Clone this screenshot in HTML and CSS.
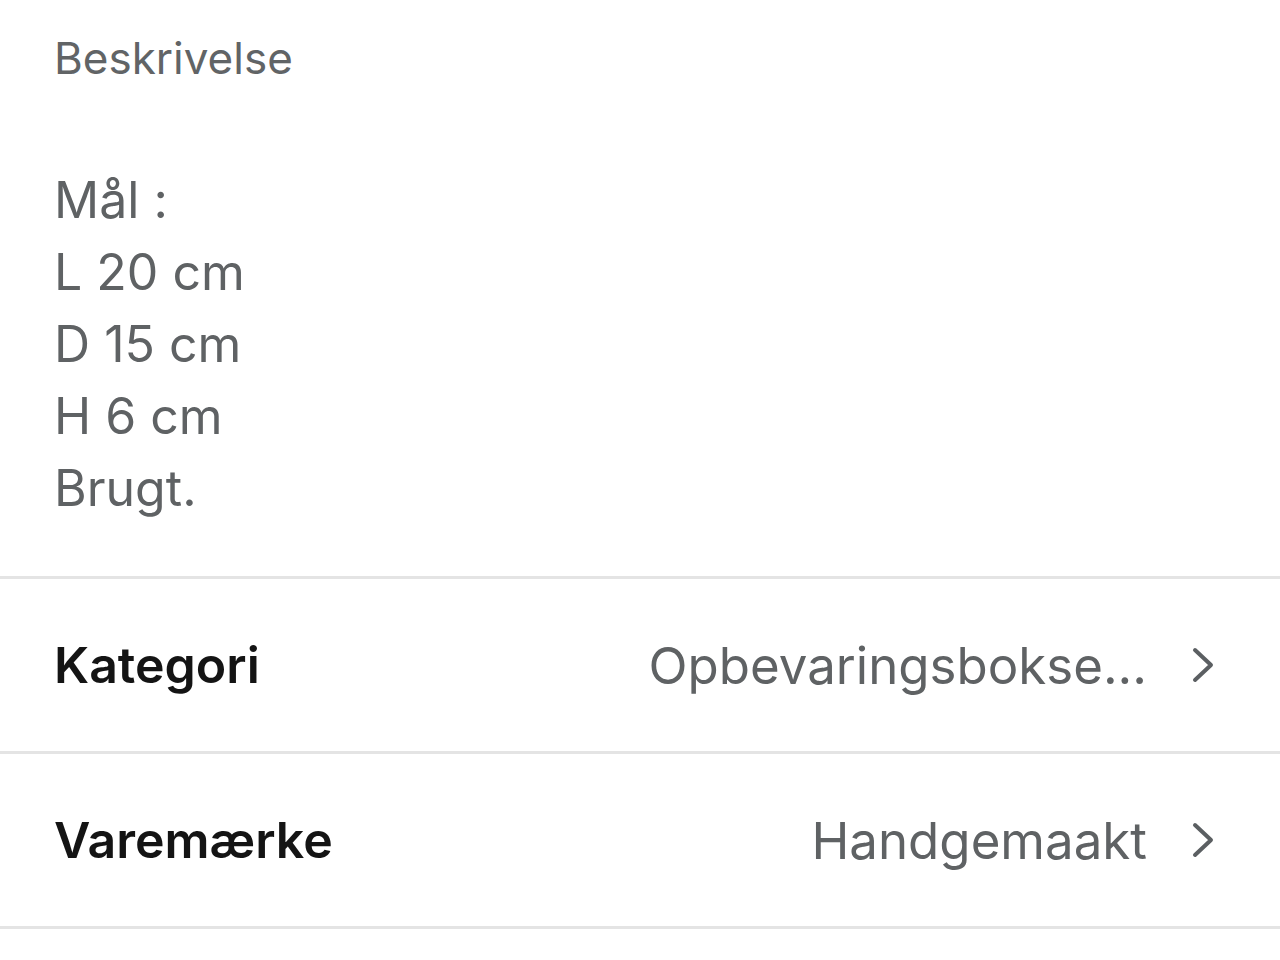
FILE: index.html
```html
<!DOCTYPE html>
<html lang="da">
<head>
<meta charset="utf-8">
<link rel="stylesheet" href="styles.css">
</head>
<body>
<main class="page">
  <section class="desc">
    <h2 class="desc-title">Beskrivelse</h2>
    <div class="desc-body">
      <div>Mål :</div>
      <div>L 20 cm</div>
      <div>D 15 cm</div>
      <div>H 6 cm</div>
      <div>Brugt.</div>
    </div>
  </section>
  <div class="row">
    <span class="row-label">Kategori</span>
    <span class="row-value">Opbevaringsbokse...</span>
    <svg class="chev" viewBox="0 0 24 36" width="24" height="36"><path d="M4 3 L20 18 L4 33" fill="none" stroke="#5b5f62" stroke-width="4" stroke-linecap="round" stroke-linejoin="round"/></svg>
  </div>
  <div class="row">
    <span class="row-label">Varemærke</span>
    <span class="row-value">Handgemaakt</span>
    <svg class="chev" viewBox="0 0 24 36" width="24" height="36"><path d="M4 3 L20 18 L4 33" fill="none" stroke="#5b5f62" stroke-width="4" stroke-linecap="round" stroke-linejoin="round"/></svg>
  </div>
</main>
</body>
</html>
```
FILE: styles.css
```css
* { box-sizing: border-box; }
html, body { margin: 0; padding: 0; background: #fff; }
body { font-family: Inter, "Noto Sans", sans-serif; }
.page { width: 1280px; }
.desc { padding: 28px 54px 52px; border-bottom: 3px solid #e4e4e4; }
.desc-title { margin: 0; font-weight: 400; font-size: 44px; line-height: 60px; color: #616466; }
.desc-body { margin-top: 76px; font-size: 50px; line-height: 72px; color: #5f6264; }
.row { display: flex; align-items: center; height: 175px; padding: 0 65px 0 54px; border-bottom: 3px solid #e4e4e4; }
.row-label { font-size: 50px; font-weight: 600; color: #141414; flex: 1; }
.row-value { font-size: 51px; color: #5f6264; margin-right: 44px; }
.chev { display: block; }
```
